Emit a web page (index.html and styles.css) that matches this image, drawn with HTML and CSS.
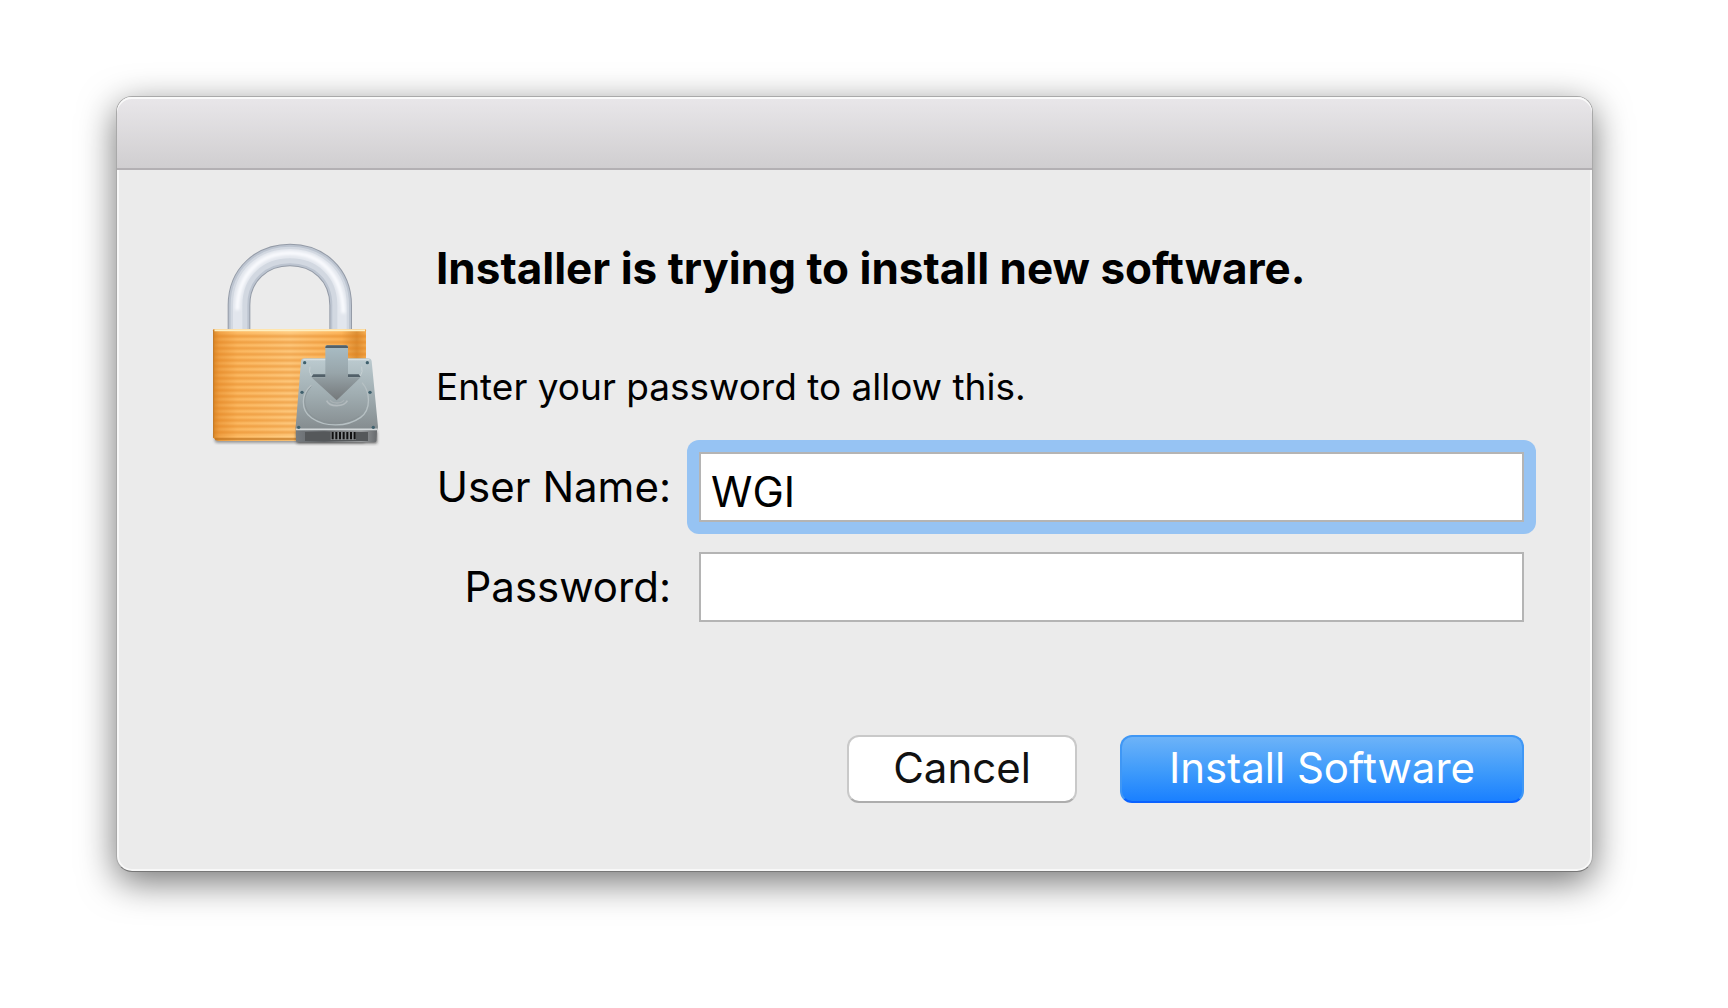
FILE: index.html
```
<!DOCTYPE html>
<html lang="en">
<head>
  <meta charset="UTF-8">
  <meta name="viewport" content="width=device-width, initial-scale=1.0">
  <title>Installer</title>
  <link rel="stylesheet" href="styles.css">
</head>
<body>
  <div class="dialog" role="dialog" aria-labelledby="title">
    <div class="titlebar"></div>
    <div class="content">
      <svg class="icon" viewBox="0 0 570 690" aria-hidden="true">
        <defs>
          <linearGradient id="brass" x1="0" x2="1" y1="0" y2="0">
            <stop offset="0" stop-color="#d88829"/>
            <stop offset=".04" stop-color="#f0a246"/>
            <stop offset=".16" stop-color="#fdbb64"/>
            <stop offset=".5" stop-color="#ffcb80"/>
            <stop offset=".84" stop-color="#fdb65c"/>
            <stop offset=".94" stop-color="#dc9036"/>
            <stop offset="1" stop-color="#f5ab4e"/>
          </linearGradient>
          <linearGradient id="groove" x1="0" x2="0" y1="0" y2="1">
            <stop offset="0" stop-color="#e07d18" stop-opacity="0"/>
            <stop offset=".5" stop-color="#e07d18" stop-opacity=".5"/>
            <stop offset="1" stop-color="#e07d18" stop-opacity="0"/>
          </linearGradient>
          <pattern id="grooves" width="20" height="18" y="310" patternUnits="userSpaceOnUse">
            <rect width="20" height="18" fill="url(#groove)"/>
          </pattern>
          <linearGradient id="metal" x1="0" x2="0" y1="0" y2="1">
            <stop offset="0" stop-color="#bccbd0"/>
            <stop offset=".5" stop-color="#a0adb1"/>
            <stop offset="1" stop-color="#848b8e"/>
          </linearGradient>
          <linearGradient id="arrow" x1="0" x2="0" y1="0" y2="1">
            <stop offset="0" stop-color="#a9bdc5"/>
            <stop offset=".5" stop-color="#98a5aa"/>
            <stop offset="1" stop-color="#74787a"/>
          </linearGradient>
          <linearGradient id="front" x1="0" x2="1" y1="0" y2="0">
            <stop offset="0" stop-color="#777c80"/>
            <stop offset=".35" stop-color="#5d6063"/>
            <stop offset=".8" stop-color="#999c9e"/>
            <stop offset="1" stop-color="#66696c"/>
          </linearGradient>
          <filter id="soft" x="-20%" y="-20%" width="140%" height="140%">
            <feGaussianBlur stdDeviation="5"/>
          </filter>
        </defs>

        <!-- shackle -->
        <g fill="none">
          <path d="M117 300V226C117 132 187 75 270 75S422 132 422 226V300" stroke="#949ba7" stroke-width="68"/>
          <path d="M117 300V226C117 132 187 75 270 75S422 132 422 226V300" stroke="#bcc4d0" stroke-width="62"/>
          <path d="M117 300V226C117 132 187 75 270 75S422 132 422 226V300" stroke="#d2d8e1" stroke-width="50"/>
          <path d="M113 300V226C113 128 185 71 270 71S426 128 426 226V300" stroke="#e2e6ed" stroke-width="28"/>
          <path d="M112 240C112 132 182 69 270 69S430 132 430 250" stroke="#fbfcff" stroke-width="12" filter="url(#soft)"/>
        </g>

        <!-- lock body -->
        <rect x="44" y="606" width="452" height="32" rx="8" fill="#555" opacity=".6" filter="url(#soft)"/>
        <path d="M39 301Q39 297 43 297H494Q498 297 498 301V624Q490 633 478 633H58Q46 633 39 622Z" fill="url(#brass)"/>
        <path d="M39 310H498V618H39Z" fill="url(#grooves)"/>
        <path d="M43 301H495" stroke="#ffefbf" stroke-width="6"/>
        <path d="M41 300V622" stroke="#c27b2a" stroke-width="3"/>
        <path d="M45 627H478" stroke="#b96a14" stroke-width="8" opacity=".6"/>

        <!-- drive -->
        <path d="M290 604H531V640H290Z" fill="#222" opacity=".7" filter="url(#soft)"/>
        <path d="M287 590H532L529 632Q528 637 522 637H296Q289 637 288 631Z" fill="url(#front)"/>
        <path d="M315 606H504V633H315Z" fill="#55585a"/>
        <path d="M392 606H468V630H392Z" fill="#85898b"/>
        <path d="M398 606V628M409 606V628M420 606V628M431 606V628M442 606V628M453 606V628M464 606V628" stroke="#111" stroke-width="6"/>
        <path d="M303 394Q304 385 313 385H504Q514 385 515 394L534 590Q534 601 524 601H296Q286 601 287 590Z" fill="url(#metal)"/>
        <path d="M288 598H532" stroke="#d4d9db" stroke-width="5"/>
        <path d="M310 389H508" stroke="#d5dfe2" stroke-width="4"/>
        <path d="M330 410Q325 425 335 440M485 410Q490 425 480 440" fill="none" stroke="#c7d1d4" stroke-width="3"/>
        <path d="M334 466C304 490 300 540 335 564C375 592 440 592 482 562C515 538 510 484 486 458" fill="none" stroke="#b7c1c4" stroke-width="4"/>
        <path d="M334 470C308 494 306 536 339 560C378 586 436 586 478 558" fill="none" stroke="#868f93" stroke-width="2"/>
        <path d="M380 512C388 532 432 532 442 512" fill="none" stroke="#b3bbbe" stroke-width="5"/>
        <path d="M390 510C398 522 424 522 432 510" fill="none" stroke="#aab2b5" stroke-width="4"/>
        <g fill="#3f606d">
          <circle cx="314" cy="398" r="5"/><circle cx="502" cy="398" r="5"/>
          <circle cx="306" cy="487" r="5"/><circle cx="510" cy="487" r="5"/>
          <circle cx="296" cy="592" r="5"/><circle cx="520" cy="592" r="5"/>
        </g>
        <path d="M376 350Q376 346 380 346H439Q444 346 444 350V442H482L410 511L334 442H376Z" fill="url(#arrow)"/>
        <path d="M376 352Q376 346 382 346H438Q444 346 444 352V354H376ZM340 433H376V441H334ZM444 433H476L482 441H444Z" fill="#526069"/>
      </svg>

      <form class="auth" id="authForm">
        <h1 id="title">Installer is trying to install new software.</h1>
        <p>Enter your password to allow this.</p>
        <div class="fields">
          <label for="username">User Name:</label>
          <div class="field focused"><input type="text" id="username" name="username" value="WGI"></div>
          <label for="password">Password:</label>
          <div class="field"><input type="password" id="password" name="password"></div>
        </div>
        <div class="buttons">
          <button type="button" class="cancel">Cancel</button>
          <button type="submit" class="install">Install Software</button>
        </div>
      </form>
    </div>
  </div>
</body>
</html>
```
FILE: styles.css
```
* {
  box-sizing: border-box;
}

body {
  margin: 0;
  padding: 96px 135px 96px 116px;
  background: #fff;
  color: #000;
  font-family: Inter, "Liberation Sans", sans-serif;
}

.dialog {
  border: 1px solid #a9a9a9;
  border-bottom-color: #777;
  border-radius: 16px;
  background: #ebebeb;
  box-shadow: 0 10px 36px rgba(0, 0, 0, 0.55), inset 0 0 0 2px #f8f8f8;
}

.titlebar {
  height: 73px;
  border-bottom: 2px solid #b3b0b3;
  border-radius: 15px 15px 0 0;
  background: linear-gradient(#e9e7ea, #d0ced0);
  box-shadow: inset 0 2px #fafafa;
}

.content {
  display: flex;
  align-items: flex-start;
  gap: 46px;
  padding: 60px 68px 68px 83px;
}

.icon {
  flex: none;
  width: 190px;
  height: 230px;
}

.auth {
  flex: 1;
}

h1 {
  margin: 10px 0 0;
  font-size: 44px;
  line-height: 56px;
  font-weight: 700;
}

p {
  margin: 66px 0 0;
  font-size: 37px;
  line-height: 50px;
}

.fields {
  display: grid;
  grid-template-columns: 235px 1fr;
  gap: 30px 28px;
  margin-top: 40px;
}

label {
  align-self: center;
  font-size: 42px;
  line-height: 56px;
  text-align: right;
  white-space: nowrap;
}

.focused {
  margin: -12px;
  padding: 12px;
  border-radius: 12px;
  background: #96c3f3;
}

input {
  display: block;
  width: 100%;
  height: 70px;
  padding: 8px 10px 0;
  border: 2px solid #b4b4b4;
  border-radius: 0;
  outline: none;
  background: #fff;
  color: #000;
  font: 42px/56px Inter, "Liberation Sans", sans-serif;
}

.buttons {
  display: flex;
  justify-content: flex-end;
  gap: 43px;
  margin-top: 113px;
}

button {
  height: 68px;
  padding: 0 0 2px;
  border-radius: 12px;
  font: 42px/56px Inter, "Liberation Sans", sans-serif;
  cursor: pointer;
}

.cancel {
  width: 230px;
  border: 2px solid #c9c9c9;
  border-bottom-color: #adadad;
  background: #fff;
  color: #111;
}

.install {
  width: 404px;
  border: 2px solid #3f97f5;
  border-bottom-color: #0a62ff;
  background: linear-gradient(#6db3f8, #3d9afb 55%, #1a80ff);
  color: #fff;
}
```
